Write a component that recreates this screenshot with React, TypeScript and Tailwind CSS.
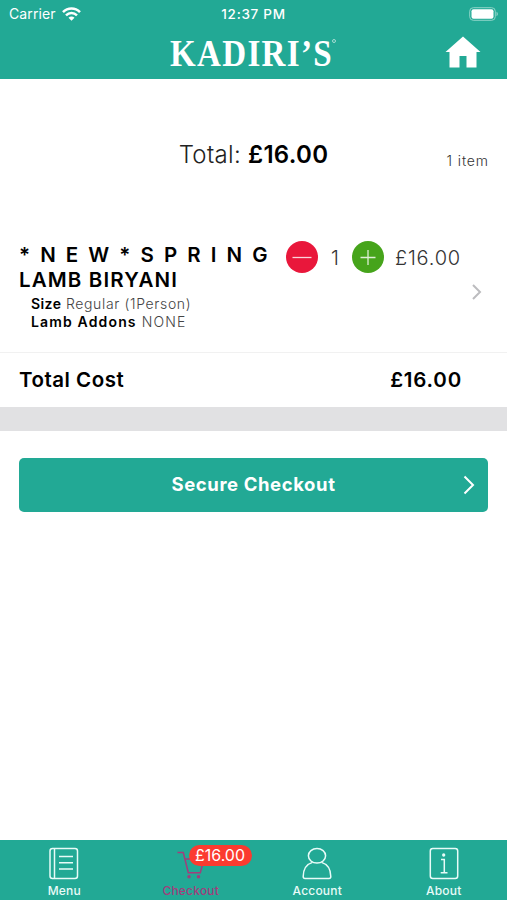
import type { ReactNode } from 'react';
import clsx from 'clsx';

function StatusBar() {
  return (
    <div className="grid h-7 grid-cols-3 items-center px-[9px] text-[14px] leading-7">
      <div className="flex items-center gap-[6px]">
        <span className="tracking-[0.1px]">Carrier</span>
        <svg width="19" height="14" viewBox="0 0 19 14" fill="none" stroke="currentColor" strokeWidth="2.5">
          <path d="M1 5.2C5.8 0.3 13.2 0.3 18 5.2" />
          <path d="M4 8.3C7.2 5.2 11.8 5.2 15 8.3" />
          <path d="M9.5 13.7L6.5 10.7C8.2 9.2 10.8 9.2 12.5 10.7Z" fill="currentColor" stroke="none" />
        </svg>
      </div>
      <span className="text-center text-[13.5px] font-medium tracking-[0.7px]">12:37 PM</span>
      <div className="flex justify-end">
        <svg width="29" height="14" viewBox="0 0 29 14" fill="none">
          <rect x="0.7" y="0.7" width="25.6" height="12.6" rx="3.6" stroke="#8fd4c8" />
          <rect x="2.5" y="2.3" width="22" height="9.4" rx="2" fill="white" />
          <path d="M27.5 4.8C29.3 5.5 29.3 8.5 27.5 9.2Z" fill="#8fd4c8" />
        </svg>
      </div>
    </div>
  );
}

function Header() {
  return (
    <header className="h-[79px] shrink-0 bg-[#22a995] text-white">
      <StatusBar />
      <div className="grid h-[51px] grid-cols-[1fr_auto_1fr] items-center px-[26px]">
        <div />
        <h1 className="flex w-[168px] items-start pb-px whitespace-nowrap">
          <span className="w-[162px] origin-left scale-x-[0.87] font-['Liberation_Serif',serif] text-[38px] leading-[50px] font-bold tracking-[1.5px]">
            KADIRI’S
          </span>
          <span className="mt-[11px] size-[4px] rounded-full border border-[#a5dcd3]" />
        </h1>
        <svg className="mb-1 justify-self-end" width="36" height="32" viewBox="0 0 36 32" fill="currentColor">
          <path d="M18 0.5L35.5 16H31.5V31.5H21.5V20H14.5V31.5H4.5V16H0.5Z" />
        </svg>
      </div>
    </header>
  );
}

function RoundButton({ className, children }: { className: string; children: ReactNode }) {
  return (
    <button className={clsx('flex size-8 items-center justify-center rounded-full', className)}>
      <svg width="20" height="20" viewBox="0 0 20 20" stroke="#ffffffd0" strokeWidth="1.3">
        {children}
      </svg>
    </button>
  );
}

function OrderItem() {
  return (
    <section className="flex h-[114px] pl-[19px] text-black">
      <div className="w-[267px] pt-1">
        <h2 className="text-[20.5px] leading-[25px] font-semibold">
          <span className="block whitespace-nowrap tracking-[10.1px]">*NEW*SPRING</span>
          <span className="block tracking-[1.15px]">LAMB BIRYANI</span>
        </h2>
        <div className="pt-[3px] pl-3 text-[14px] leading-[18px] font-light text-[#444]">
          <p className="tracking-[0.65px]">
            <b className="font-semibold tracking-[0.4px] text-black">Size</b> Regular (1Person)
          </p>
          <p className="tracking-[1.15px]">
            <b className="font-semibold text-black">Lamb Addons</b> NONE
          </p>
        </div>
      </div>
      <div className="mt-[3px] flex h-8 items-center text-[20px] font-light text-[#333]">
        <RoundButton className="bg-[#e9173b]">
          <path d="M0.5 10.5H19.5" />
        </RoundButton>
        <span className="w-[34px] pt-px text-center">1</span>
        <RoundButton className="bg-[#46a41b]">
          <path d="M2.5 10.5H17.5M10 3V18" />
        </RoundButton>
        <span className="w-[77px] pt-px pl-[11px] tracking-[0.8px]">£16.00</span>
      </div>
      <svg className="mt-[46px] ml-[11px]" width="10" height="16" viewBox="0 0 10 16" fill="none" stroke="#bcbcbf" strokeWidth="2">
        <path d="M1 1L8 8L1 15" />
      </svg>
    </section>
  );
}

function Tab({ label, active, badge, children }: { label: string; active?: boolean; badge?: string; children: ReactNode }) {
  return (
    <a className={clsx('relative flex w-[126.5px] flex-col items-center pt-[7px]', active ? 'text-[#a33d7c]' : 'text-[#e8fbf8]')}>
      <svg width="32" height="34" viewBox="0 0 32 34" fill="none" stroke="currentColor" strokeWidth="1.5">
        {children}
      </svg>
      <span className="text-[12px] leading-[19px] font-medium tracking-[0.2px]">{label}</span>
      {badge && (
        <span className="absolute top-[5px] left-[61px] h-[21px] w-[63px] rounded-full bg-[#fb3b30] text-center text-[16px] leading-[21px] text-white">
          {badge}
        </span>
      )}
    </a>
  );
}

function TabBar() {
  return (
    <nav className="flex h-[60px] shrink-0 bg-[#22a995] pl-px">
      <Tab label="Menu">
        <rect x="2" y="1.5" width="27.5" height="30" rx="2.5" />
        <path d="M6.5 1.5V31.5M11 9.5H25M11 15.8H25M11 22H25" />
      </Tab>
      <Tab label="Checkout" active badge="£16.00">
        <path d="M2.5 5.5H8.3L13.3 25.7H25.3L29 12H10" />
        <circle cx="14" cy="29.7" r="1" fill="currentColor" />
        <circle cx="23.5" cy="29.7" r="1" fill="currentColor" />
      </Tab>
      <Tab label="Account">
        <ellipse cx="16" cy="8.8" rx="8.6" ry="7.3" />
        <path d="M11.5 15.4C5.5 17.2 2.3 22 2.2 29.5Q2.2 31.5 4 31.5H28Q29.8 31.5 29.8 29.5C29.7 22 26.5 17.2 20.5 15.4" />
      </Tab>
      <Tab label="About">
        <rect x="2.3" y="1.5" width="27.4" height="30" rx="2.5" />
        <path d="M13 12.5H16.3V25.5M12.7 25.7H19.5" />
        <circle cx="15.7" cy="8" r="0.9" fill="currentColor" />
      </Tab>
    </nav>
  );
}

export default function App() {
  return (
    <div className="flex h-[900px] w-[507px] flex-col overflow-hidden bg-white font-['Inter',sans-serif]">
      <Header />
      <main className="flex-1">
        <div className="relative h-[159px] pt-[60px]">
          <p className="text-center text-[24px] leading-[32px] font-light tracking-[0.3px] text-[#222]">
            Total: <b className="font-semibold text-black">£16.00</b>
          </p>
          <span className="absolute top-[72px] right-[18px] text-[14px] leading-5 font-light tracking-[0.9px] text-[#333]">1 item</span>
        </div>
        <OrderItem />
        <div className="flex h-[55px] items-center justify-between border-t border-[#f1f1f1] pr-[45px] pl-[19px] text-[20.5px] font-semibold text-black">
          <span className="tracking-[0.5px]">Total Cost</span>
          <span className="tracking-[0.8px]">£16.00</span>
        </div>
        <div className="h-6 bg-[#e1e1e3]" />
        <div className="px-[19px] pt-[27px]">
          <button className="relative h-[54px] w-full rounded-[5px] bg-[#22a995] text-[18.5px] font-bold tracking-[0.6px] text-white">
            Secure Checkout
            <svg className="absolute top-[17px] right-[13px]" width="12" height="20" viewBox="0 0 12 20" fill="none" stroke="currentColor" strokeWidth="2">
              <path d="M1.5 1.5L10 10L1.5 18.5" />
            </svg>
          </button>
        </div>
      </main>
      <TabBar />
    </div>
  );
}
